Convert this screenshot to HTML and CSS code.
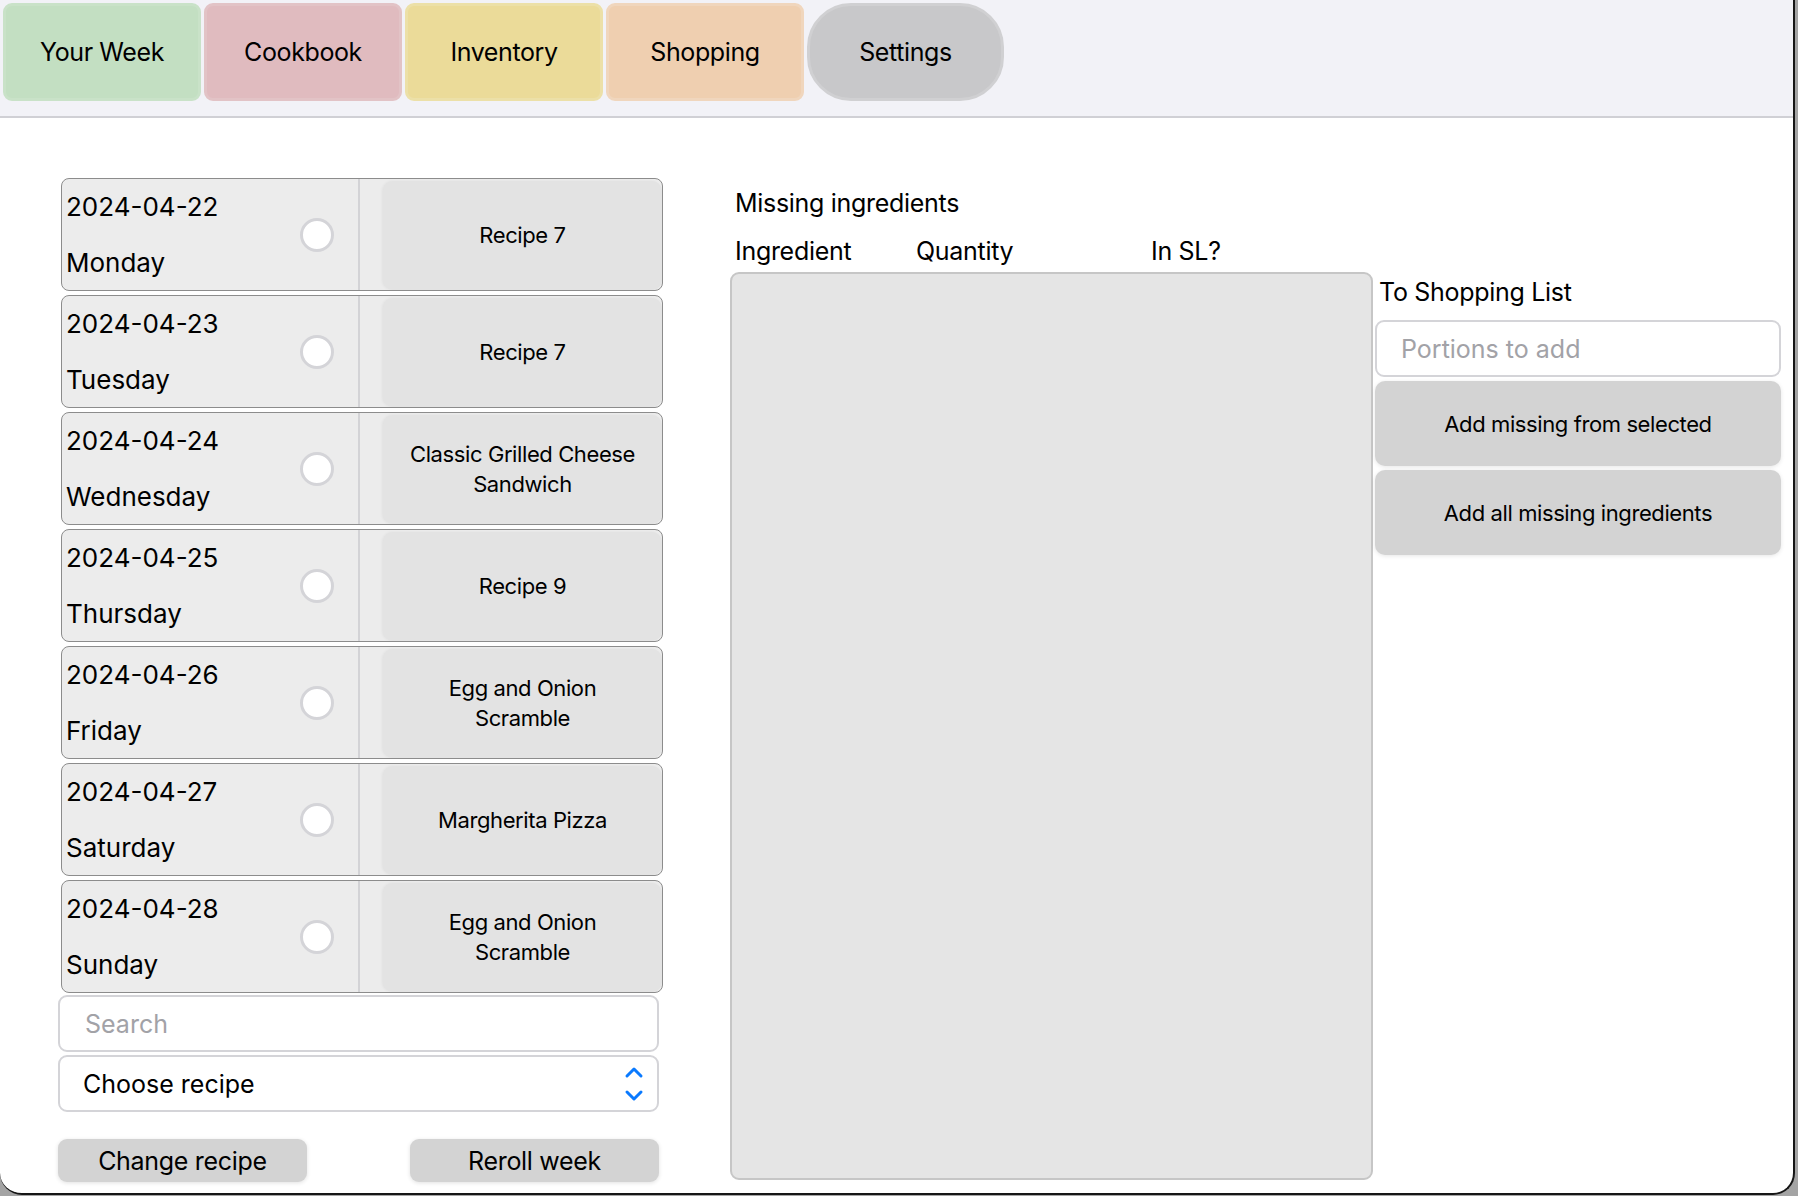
FILE: index.html
```html
<!DOCTYPE html>
<html lang="en">
<head>
<meta charset="utf-8">
<title>Your Week</title>
<link rel="stylesheet" href="styles.css">
</head>
<body>
<div class="window">
  <header class="tabbar">
    <div class="tab tab-week">Your Week</div>
    <div class="tab tab-cook">Cookbook</div>
    <div class="tab tab-inv">Inventory</div>
    <div class="tab tab-shop">Shopping</div>
    <div class="tab tab-settings">Settings</div>
  </header>
  <main class="content">
    <section class="week">
      <div class="days">
        <div class="day">
          <div class="day-info">
            <div class="day-text"><span class="date">2024-04-22</span><span class="dayname">Monday</span></div>
            <span class="radio"></span>
          </div>
          <div class="day-recipe"><div class="recipe-btn">Recipe 7</div></div>
        </div>
        <div class="day">
          <div class="day-info">
            <div class="day-text"><span class="date">2024-04-23</span><span class="dayname">Tuesday</span></div>
            <span class="radio"></span>
          </div>
          <div class="day-recipe"><div class="recipe-btn">Recipe 7</div></div>
        </div>
        <div class="day">
          <div class="day-info">
            <div class="day-text"><span class="date">2024-04-24</span><span class="dayname">Wednesday</span></div>
            <span class="radio"></span>
          </div>
          <div class="day-recipe"><div class="recipe-btn">Classic Grilled Cheese<br>Sandwich</div></div>
        </div>
        <div class="day">
          <div class="day-info">
            <div class="day-text"><span class="date">2024-04-25</span><span class="dayname">Thursday</span></div>
            <span class="radio"></span>
          </div>
          <div class="day-recipe"><div class="recipe-btn">Recipe 9</div></div>
        </div>
        <div class="day">
          <div class="day-info">
            <div class="day-text"><span class="date">2024-04-26</span><span class="dayname">Friday</span></div>
            <span class="radio"></span>
          </div>
          <div class="day-recipe"><div class="recipe-btn">Egg and Onion<br>Scramble</div></div>
        </div>
        <div class="day">
          <div class="day-info">
            <div class="day-text"><span class="date">2024-04-27</span><span class="dayname">Saturday</span></div>
            <span class="radio"></span>
          </div>
          <div class="day-recipe"><div class="recipe-btn">Margherita Pizza</div></div>
        </div>
        <div class="day">
          <div class="day-info">
            <div class="day-text"><span class="date">2024-04-28</span><span class="dayname">Sunday</span></div>
            <span class="radio"></span>
          </div>
          <div class="day-recipe"><div class="recipe-btn">Egg and Onion<br>Scramble</div></div>
        </div>
      </div>
      <div class="field search"><span class="placeholder">Search</span></div>
      <div class="field select">
        <span>Choose recipe</span>
        <svg class="chevrons" width="20" height="40" viewBox="0 0 20 40" aria-hidden="true">
          <path d="M3 12 L10 5 L17 12" fill="none" stroke="#0a7aff" stroke-width="3" stroke-linecap="round" stroke-linejoin="round"/>
          <path d="M3 28 L10 35 L17 28" fill="none" stroke="#0a7aff" stroke-width="3" stroke-linecap="round" stroke-linejoin="round"/>
        </svg>
      </div>
      <div class="actions">
        <div class="btn">Change recipe</div>
        <div class="btn">Reroll week</div>
      </div>
    </section>
    <section class="missing">
      <div class="missing-title">Missing ingredients</div>
      <div class="cols">
        <span>Ingredient</span>
        <span>Quantity</span>
        <span>In SL?</span>
      </div>
      <div class="missing-body">
        <div class="panel"></div>
        <aside class="to-list">
          <div class="to-list-title">To Shopping List</div>
          <div class="field portions"><span class="placeholder">Portions to add</span></div>
          <div class="side-btn">Add missing from selected</div>
          <div class="side-btn">Add all missing ingredients</div>
        </aside>
      </div>
    </section>
  </main>
</div>
</body>
</html>
```
FILE: styles.css
```css
* { box-sizing: border-box; }

html, body {
  margin: 0;
  padding: 0;
}

body {
  width: 1798px;
  height: 1196px;
  background: #a4a4a4;
  font-family: "Inter", "Noto Sans", "Liberation Sans", sans-serif;
  color: #000;
  overflow: hidden;
}

.window {
  width: 1795px;
  height: 1195px;
  background: #fff;
  border-right: 2px solid #161616;
  border-bottom: 2px solid #161616;
  border-radius: 0 0 22px 22px;
  overflow: hidden;
}

/* ---------- tab bar ---------- */
.tabbar {
  height: 118px;
  background: #f2f2f7;
  border-bottom: 2px solid #d0d0d5;
  display: flex;
  gap: 3px;
  padding: 3px 0 0 3px;
}

.tab {
  width: 198px;
  height: 98px;
  border-radius: 9px;
  display: flex;
  align-items: center;
  justify-content: center;
  font-size: 25px;
  letter-spacing: -0.4px;
  border: 3px solid;
}

.tab-week { background: #c3dfc2; border-color: #c9e2c8; }
.tab-cook { background: #e0bbbf; border-color: #e2c3c6; }
.tab-inv { background: #ebdb99; border-color: #ece0a8; }
.tab-shop { background: #efcfb0; border-color: #f0d6bd; }
.tab-settings {
  width: 197px;
  background: #c8c8ca;
  border-color: #d0d0d2;
  border-radius: 44px;
}

/* ---------- content ---------- */
.content {
  display: flex;
  padding: 60px 0 0 58px;
}

.week {
  width: 605px;
  display: flex;
  flex-direction: column;
}

.days {
  display: flex;
  flex-direction: column;
  gap: 4px;
  margin-left: 3px;
}

.day {
  width: 602px;
  height: 113px;
  display: flex;
  background: #ececec;
  border: 1.5px solid #8c8c8c;
  border-radius: 8px;
  overflow: hidden;
}

.day-info {
  width: 298px;
  display: flex;
  align-items: center;
  justify-content: space-between;
  padding: 0 24px 0 4px;
  border-right: 2px solid #d3d3d6;
}

.day-text {
  height: 100%;
  display: flex;
  flex-direction: column;
}

.date, .dayname {
  flex: 1;
  display: flex;
  align-items: center;
  font-size: 26px;
}

.date { padding-bottom: 2px; }
.dayname { padding-top: 0; }

.radio {
  width: 34px;
  height: 34px;
  border-radius: 50%;
  background: #fff;
  border: 3px solid #d4d4d8;
}

.day-recipe {
  flex: 1;
  padding: 2px 0 0 23px;
}

.recipe-btn {
  height: 100%;
  background: #e3e3e3;
  border-radius: 10px;
  box-shadow: -1px 0 3px rgba(0, 0, 0, 0.05);
  display: flex;
  align-items: center;
  justify-content: center;
  text-align: center;
  font-size: 22px;
  line-height: 30px;
  letter-spacing: -0.4px;
  padding-bottom: 2px;
}

.field {
  width: 601px;
  height: 57px;
  background: #fff;
  border: 2px solid #d4d4d8;
  border-radius: 9px;
  display: flex;
  align-items: center;
  font-size: 25px;
}

.search {
  margin-top: 2px;
  padding-left: 25px;
}

.placeholder { color: #a2a2a7; }

.select {
  margin-top: 3px;
  padding: 0 13px 0 23px;
  justify-content: space-between;
}

.actions {
  margin-top: 27px;
  width: 601px;
  display: flex;
  justify-content: space-between;
}

.btn {
  width: 249px;
  height: 43px;
  background: #d3d3d3;
  border-radius: 9px;
  box-shadow: 0 1px 4px rgba(0, 0, 0, 0.12);
  display: flex;
  align-items: center;
  justify-content: center;
  font-size: 25px;
  letter-spacing: -0.3px;
}

/* ---------- missing ingredients ---------- */
.missing {
  margin-left: 67px;
  padding-top: 10px;
  display: flex;
  flex-direction: column;
}

.missing-title {
  padding-left: 5px;
  font-size: 25px;
  line-height: 30px;
  letter-spacing: -0.3px;
}

.cols {
  margin-top: 18px;
  padding-left: 5px;
  display: grid;
  grid-template-columns: 181px 235px auto;
  font-size: 25px;
  line-height: 30px;
  letter-spacing: -0.3px;
}

.missing-body {
  margin-top: 6px;
  display: flex;
  gap: 2px;
}

.panel {
  width: 643px;
  height: 908px;
  background: #e5e5e5;
  border: 2px solid #c6c6c6;
  border-radius: 9px;
}

.to-list {
  width: 406px;
  display: flex;
  flex-direction: column;
}

.to-list-title {
  padding: 5px 0 0 4px;
  font-size: 25px;
  line-height: 30px;
  letter-spacing: -0.3px;
}

.portions {
  width: 406px;
  margin-top: 13px;
  padding-left: 24px;
}

.side-btn {
  height: 85px;
  margin-top: 4px;
  background: #d3d3d3;
  border-radius: 10px;
  box-shadow: 0 1px 4px rgba(0, 0, 0, 0.1);
  display: flex;
  align-items: center;
  justify-content: center;
  font-size: 22px;
  letter-spacing: -0.4px;
}
```
